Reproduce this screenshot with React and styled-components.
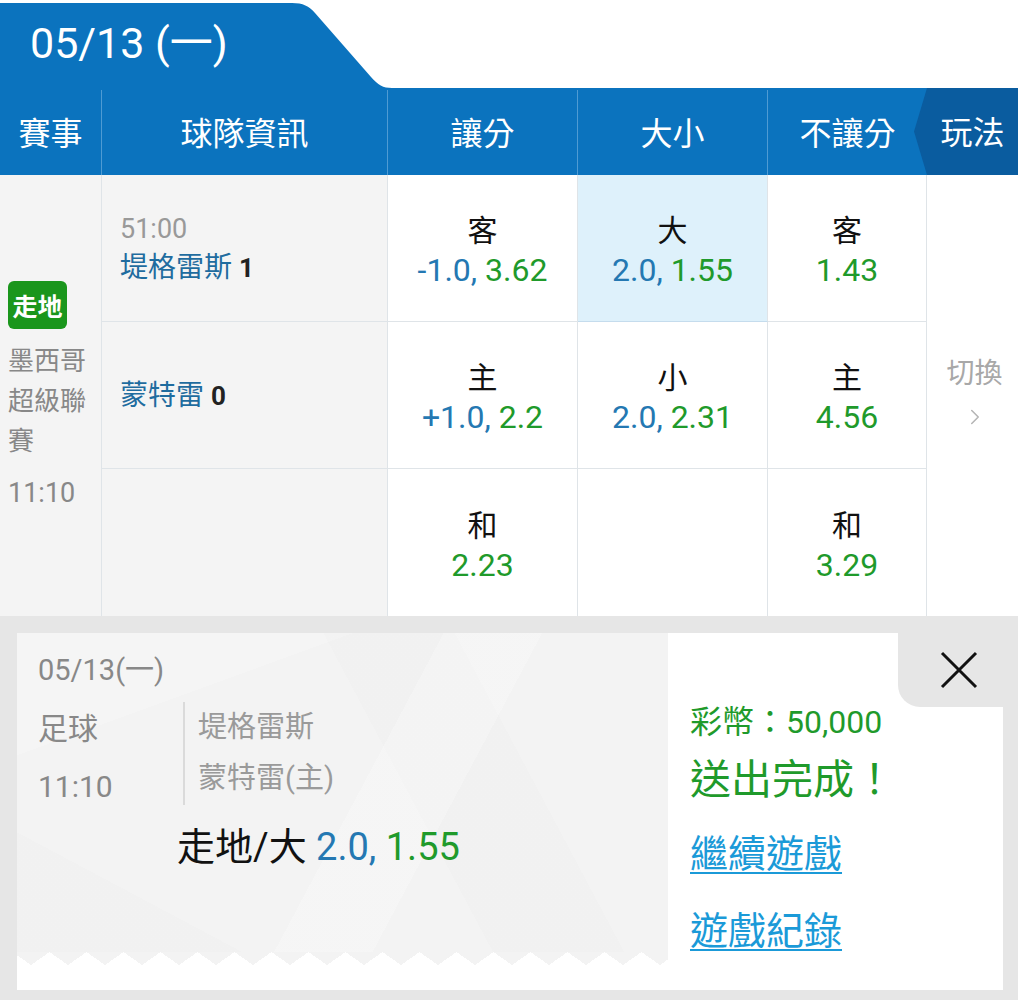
import styled, { createGlobalStyle } from 'styled-components';
import { ChevronRight } from 'lucide-react';

const GlobalStyle = createGlobalStyle`
  body {
    margin: 0;
    background: #fff;
    font-family: Roboto, "Noto Sans CJK TC", sans-serif;
  }
`;

const COLS = '102px 286px 190px 190px 159px 91px';

const rows = [
  {
    time: '51:00',
    team: '堤格雷斯',
    score: 1,
    handicap: { label: '客', line: '-1.0', odds: '3.62' },
    total: { label: '大', line: '2.0', odds: '1.55', active: true },
    plain: { label: '客', odds: '1.43' },
  },
  {
    team: '蒙特雷',
    score: 0,
    handicap: { label: '主', line: '+1.0', odds: '2.2' },
    total: { label: '小', line: '2.0', odds: '2.31' },
    plain: { label: '主', odds: '4.56' },
  },
  {
    handicap: { label: '和', odds: '2.23' },
    total: null,
    plain: { label: '和', odds: '3.29' },
  },
];

function OddsCell({ data, last }) {
  return (
    <Odds $active={data && data.active} $last={last}>
      {data && (
        <>
          <OddsLabel>{data.label}</OddsLabel>
          <OddsValue>
            {data.line && <Line>{data.line}, </Line>}
            <Price>{data.odds}</Price>
          </OddsValue>
        </>
      )}
    </Odds>
  );
}

export default function App() {
  return (
    <Page>
      <GlobalStyle />
      <TabBar>
        <DateTab>05/13 (一)</DateTab>
      </TabBar>
      <HeaderRow>
        <HeadCell>賽事</HeadCell>
        <HeadCell>球隊資訊</HeadCell>
        <HeadCell>讓分</HeadCell>
        <HeadCell>大小</HeadCell>
        <HeadCell>不讓分</HeadCell>
        <PlayCell>玩法</PlayCell>
      </HeaderRow>

      <Board>
        <EventCell>
          <LiveBadge>走地</LiveBadge>
          <League>墨西哥超級聯賽</League>
          <KickOff>11:10</KickOff>
        </EventCell>
        {rows.map((r, i) => (
          <Row key={i}>
            <TeamCell $last={i === 2}>
              {r.time && <Clock>{r.time}</Clock>}
              {r.team && (
                <TeamName>
                  {r.team} <Score>{r.score}</Score>
                </TeamName>
              )}
            </TeamCell>
            <OddsCell data={r.handicap} last={i === 2} />
            <OddsCell data={r.total} last={i === 2} />
            <OddsCell data={r.plain} last={i === 2} />
          </Row>
        ))}
        <SwitchCell>
          <SwitchText>切換</SwitchText>
          <ChevronRight size={26} strokeWidth={1.4} color="#b5b5b5" />
        </SwitchCell>
      </Board>

      <SlipArea>
        <Ticket>
          <TicketLeft>
            <TicketBody>
              <SlipDate>05/13(一)</SlipDate>
              <SlipInfo>
                <SlipMeta>
                  <span>足球</span>
                  <span>11:10</span>
                </SlipMeta>
                <SlipTeams>
                  <span>堤格雷斯</span>
                  <span>蒙特雷(主)</span>
                </SlipTeams>
              </SlipInfo>
              <SlipBet>
                走地/大 <Line>2.0, </Line>
                <Price>1.55</Price>
              </SlipBet>
            </TicketBody>
            <Zigzag />
            <TicketFoot />
          </TicketLeft>
          <TicketRight>
            <CloseRow>
              <CloseButton aria-label="close">
                <svg width="38" height="38" viewBox="0 0 38 38">
                  <path d="M2 2 L36 36 M36 2 L2 36" stroke="#111" strokeWidth="3" fill="none" />
                </svg>
              </CloseButton>
            </CloseRow>
            <ResultBox>
              <Coins>彩幣：50,000</Coins>
              <Done>送出完成！</Done>
              <LinkText href="#">繼續遊戲</LinkText>
              <LinkText href="#">遊戲紀錄</LinkText>
            </ResultBox>
          </TicketRight>
        </Ticket>
      </SlipArea>
    </Page>
  );
}

const Page = styled.div`
  width: 1018px;
  background: #fff;
`;

const TabBar = styled.div`
  height: 88px;
  display: flex;
  align-items: flex-end;
`;

const DateTab = styled.div`
  width: 392px;
  height: 85px;
  box-sizing: border-box;
  padding-left: 30px;
  background: #0b73be;
  color: #fff;
  font-size: 43px;
  line-height: 80px;
  clip-path: path('M0 0 H292 C303 0 309 3 315 10 L371 74 C378 82 383 85 392 85 H0 Z');
`;

const HeaderRow = styled.div`
  display: grid;
  grid-template-columns: ${COLS};
  height: 87px;
  background: #0b73be;
`;

const HeadCell = styled.div`
  display: flex;
  align-items: center;
  justify-content: center;
  color: #fff;
  font-size: 32px;
  border-right: 1px solid #4f9bd3;
  margin-top: 2px;
  padding-bottom: 4px;

  &:nth-child(5) {
    border-right: none;
  }
`;

const PlayCell = styled.div`
  margin-left: -13px;
  padding: 0 0 4px 13px;
  display: flex;
  align-items: center;
  justify-content: center;
  color: #fff;
  font-size: 32px;
  background: #0a5c9f;
  clip-path: polygon(13px 0, 100% 0, 100% 100%, 13px 100%, 0 50%);
`;

const Board = styled.div`
  display: grid;
  grid-template-columns: ${COLS};
  grid-template-rows: repeat(3, 147px);
`;

const Row = styled.div`
  display: contents;
`;

const EventCell = styled.div`
  grid-row: 1 / 4;
  grid-column: 1;
  background: #f4f4f4;
  border-right: 1px solid #dfe4e8;
  display: flex;
  flex-direction: column;
  justify-content: center;
  align-items: flex-start;
  padding: 2px 0 0 8px;
`;

const LiveBadge = styled.span`
  display: inline-flex;
  align-items: center;
  justify-content: center;
  width: 59px;
  height: 48px;
  border-radius: 6px;
  background: #1a961c;
  color: #fff;
  font-size: 25px;
  font-weight: bold;
  margin-bottom: 12px;
`;

const League = styled.div`
  width: 90px;
  color: #888;
  font-size: 26px;
  line-height: 40px;
`;

const KickOff = styled.div`
  color: #888;
  font-size: 27px;
  line-height: 40px;
  margin-top: 12px;
`;

const TeamCell = styled.div`
  grid-column: 2;
  background: #f4f4f4;
  border-right: 1px solid #dfe4e8;
  border-bottom: ${(p) => (p.$last ? 'none' : '1px solid #dfe4e8')};
  display: flex;
  flex-direction: column;
  justify-content: center;
  padding: 2px 0 0 18px;
`;

const Clock = styled.div`
  color: #999;
  font-size: 27px;
  line-height: 38px;
`;

const TeamName = styled.div`
  color: #1f6c9f;
  font-size: 28px;
  line-height: 40px;
`;

const Score = styled.b`
  color: #222;
  font-size: 26px;
`;

const Odds = styled.div`
  background: ${(p) => (p.$active ? '#def1fb' : '#fff')};
  border-right: 1px solid #dfe4e8;
  border-bottom: ${(p) => (p.$last ? 'none' : p.$active ? '1px solid #c5dced' : '1px solid #dfe4e8')};
  display: flex;
  flex-direction: column;
  align-items: center;
  justify-content: center;
  padding-top: 6px;
`;

const OddsLabel = styled.div`
  color: #111;
  font-size: 30px;
  line-height: 38px;
`;

const OddsValue = styled.div`
  font-size: 32px;
  line-height: 40px;
`;

const Line = styled.span`
  color: #2478b2;
`;

const Price = styled.span`
  color: #1f9a2b;
`;

const SwitchCell = styled.div`
  grid-column: 6;
  grid-row: 1 / 4;
  display: flex;
  flex-direction: column;
  align-items: center;
  justify-content: center;
  padding: 0 0 4px 4px;
  gap: 13px;
`;

const SwitchText = styled.div`
  color: #a8a8a8;
  font-size: 28px;
  line-height: 34px;
`;

const SlipArea = styled.div`
  background: #e6e6e6;
  padding: 17px 15px 10px 17px;
`;

const Ticket = styled.div`
  display: flex;
  height: 357px;
`;

const TicketLeft = styled.div`
  width: 651px;
  display: flex;
  flex-direction: column;
`;

const TicketBody = styled.div`
  flex: 1;
  padding: 19px 0 0 21px;
  background-color: #f3f3f3;
  background-image: linear-gradient(118deg, transparent 52%, rgba(255, 255, 255, 0.22) 52%, rgba(255, 255, 255, 0.22) 64%, transparent 64%),
    linear-gradient(62deg, transparent 58%, rgba(0, 0, 0, 0.008) 58%, rgba(0, 0, 0, 0.008) 74%, transparent 74%),
    linear-gradient(160deg, rgba(255, 255, 255, 0.2) 22%, transparent 22%),
    linear-gradient(28deg, rgba(0, 0, 0, 0.008) 18%, transparent 18%);
`;

const SlipDate = styled.div`
  color: #888;
  font-size: 29px;
  line-height: 36px;
`;

const SlipInfo = styled.div`
  display: flex;
  margin-top: 14px;
`;

const SlipMeta = styled.div`
  width: 145px;
  display: flex;
  flex-direction: column;
  color: #888;
  font-size: 30px;
  line-height: 58px;
  margin-top: -2px;
`;

const SlipTeams = styled.div`
  display: flex;
  flex-direction: column;
  border-left: 2px solid #dadada;
  padding-left: 13px;
  height: 103px;
  color: #9a9a9a;
  font-size: 29px;
  line-height: 51px;
`;

const SlipBet = styled.div`
  margin: 8px 0 0 139px;
  color: #111;
  font-size: 38px;
  line-height: 46px;
`;

const Zigzag = styled.div`
  height: 13px;
  background-color: #f3f3f3;
  background-image: conic-gradient(from 125deg at 50% 0, #fff 0 110deg, transparent 0);
  background-size: 37px 13px;
  background-position: 14px 0;
  background-repeat: repeat-x;
`;

const TicketFoot = styled.div`
  height: 25px;
  background: #fff;
`;

const TicketRight = styled.div`
  flex: 1;
  background: #fff;
  display: flex;
  flex-direction: column;
`;

const CloseRow = styled.div`
  display: flex;
  justify-content: flex-end;
`;

const CloseButton = styled.div`
  width: 105px;
  height: 74px;
  box-sizing: border-box;
  padding-left: 16px;
  background: #e6e6e6;
  border-bottom-left-radius: 22px;
  display: flex;
  align-items: center;
  justify-content: center;
`;

const ResultBox = styled.div`
  padding-left: 22px;
  display: flex;
  flex-direction: column;
  align-items: flex-start;
`;

const Coins = styled.div`
  color: #1f9a2b;
  font-size: 32px;
  line-height: 30px;
`;

const Done = styled.div`
  color: #1f9a2b;
  font-size: 41px;
  line-height: 50px;
  margin-top: 18px;
`;

const LinkText = styled.a`
  color: #1b9ad8;
  font-size: 38px;
  line-height: 50px;
  margin-top: 24px;
  text-decoration: underline;
  text-underline-offset: 5px;
  text-decoration-thickness: 2px;

  & + & {
    margin-top: 27px;
  }
`;
